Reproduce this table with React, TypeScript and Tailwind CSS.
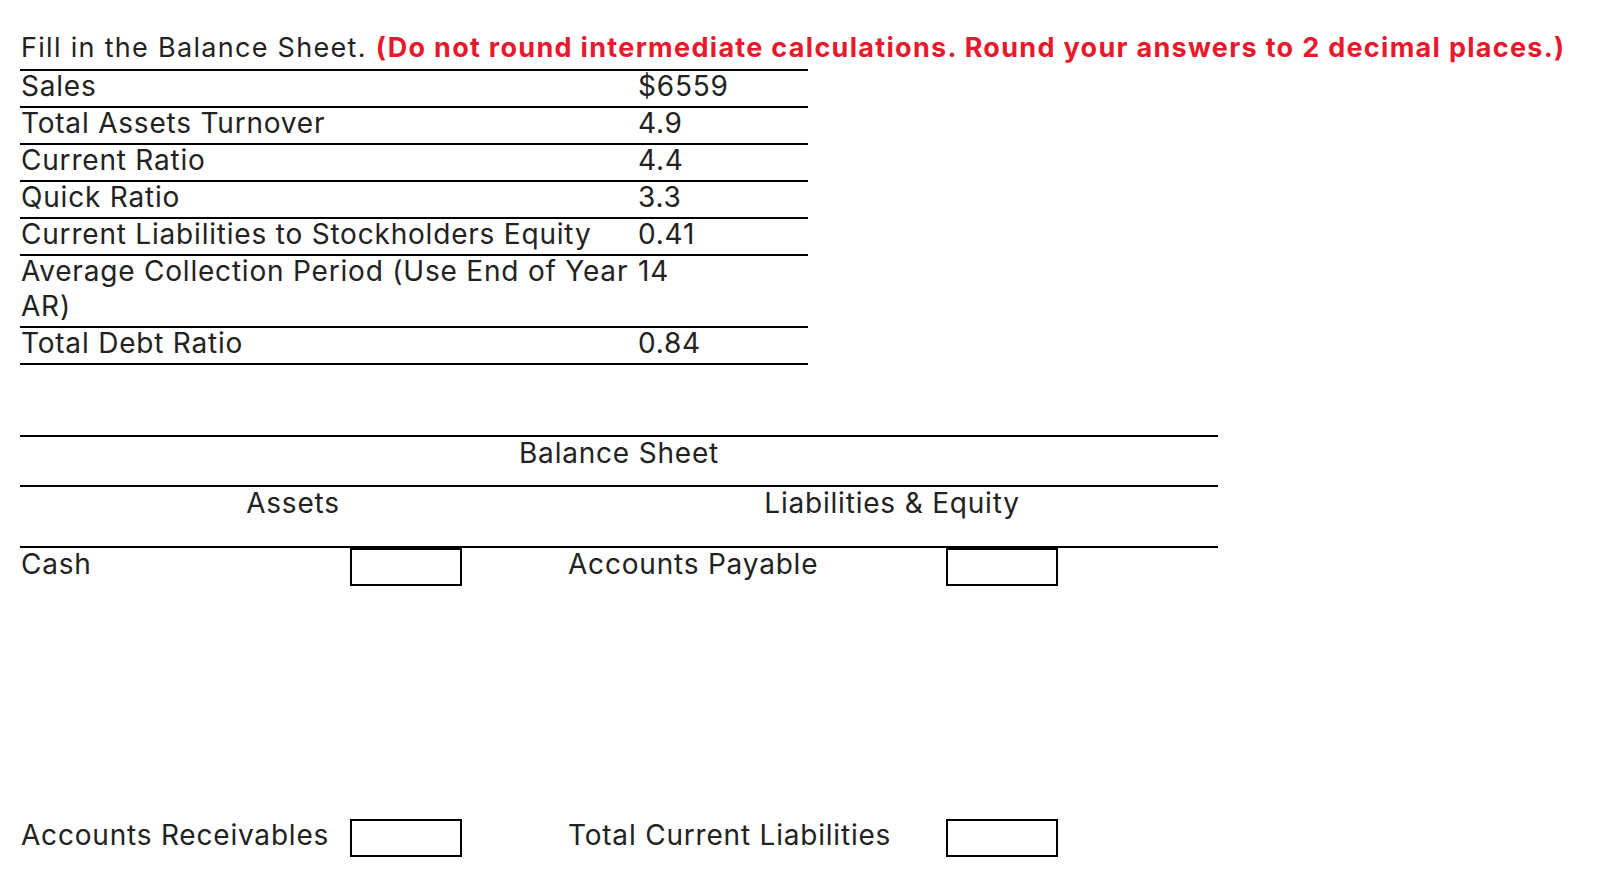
import React from "react";

const ratios: { label: React.ReactNode; value: string }[] = [
  { label: "Sales", value: "$6559" },
  { label: "Total Assets Turnover", value: "4.9" },
  { label: "Current Ratio", value: "4.4" },
  { label: "Quick Ratio", value: "3.3" },
  { label: "Current Liabilities to Stockholders Equity", value: "0.41" },
  {
    label: (
      <>
        Average Collection Period (Use End of Year
        <br />
        AR)
      </>
    ),
    value: "14",
  },
  { label: "Total Debt Ratio", value: "0.84" },
];

function AnswerBox() {
  return <div className="h-[38px] w-[112px] border-2 border-black bg-white" />;
}

function SheetRow({ left, right }: { left: string; right: string }) {
  return (
    <div className="grid grid-cols-[330px_112px_106px_378px_112px] items-start">
      <div className="leading-[33px] pl-px">{left}</div>
      <AnswerBox />
      <div />
      <div className="leading-[33px]">{right}</div>
      <AnswerBox />
    </div>
  );
}

export default function App() {
  return (
    <div className="min-h-[870px] bg-white pl-[20px] pt-[30px] font-['Inter',sans-serif] text-[28px] tracking-[0.8px] text-[#222]">
      <p className="pl-px text-[27px] leading-[35px] tracking-[1.3px] whitespace-nowrap">
        Fill in the Balance Sheet.{" "}
        <span className="font-bold text-[#e8192c]">
          (Do not round intermediate calculations. Round your answers to 2 decimal places.)
        </span>
      </p>

      {/* given ratios */}
      <div className="mt-[4px] w-[788px] border-b-2 border-black">
        {ratios.map((r, i) => (
          <div key={i} className="grid grid-cols-[618px_1fr] border-t-2 border-black">
            <div className="-mt-[2px] pb-[2px] pl-px leading-[35px]">{r.label}</div>
            <div className="-mt-[2px] pb-[2px] leading-[35px]">{r.value}</div>
          </div>
        ))}
      </div>

      {/* balance sheet */}
      <div className="mt-[70px] w-[1198px]">
        <div className="h-[50px] border-t-2 border-black text-center leading-[33px]">
          Balance Sheet
        </div>
        <div className="grid h-[61px] grid-cols-[546px_1fr] border-t-2 border-black text-center leading-[33px]">
          <div>Assets</div>
          <div>Liabilities &amp; Equity</div>
        </div>
        <div className="border-t-2 border-black">
          <SheetRow left="Cash" right="Accounts Payable" />
          <div className="h-[233px]" />
          <SheetRow left="Accounts Receivables" right="Total Current Liabilities" />
        </div>
      </div>
    </div>
  );
}
